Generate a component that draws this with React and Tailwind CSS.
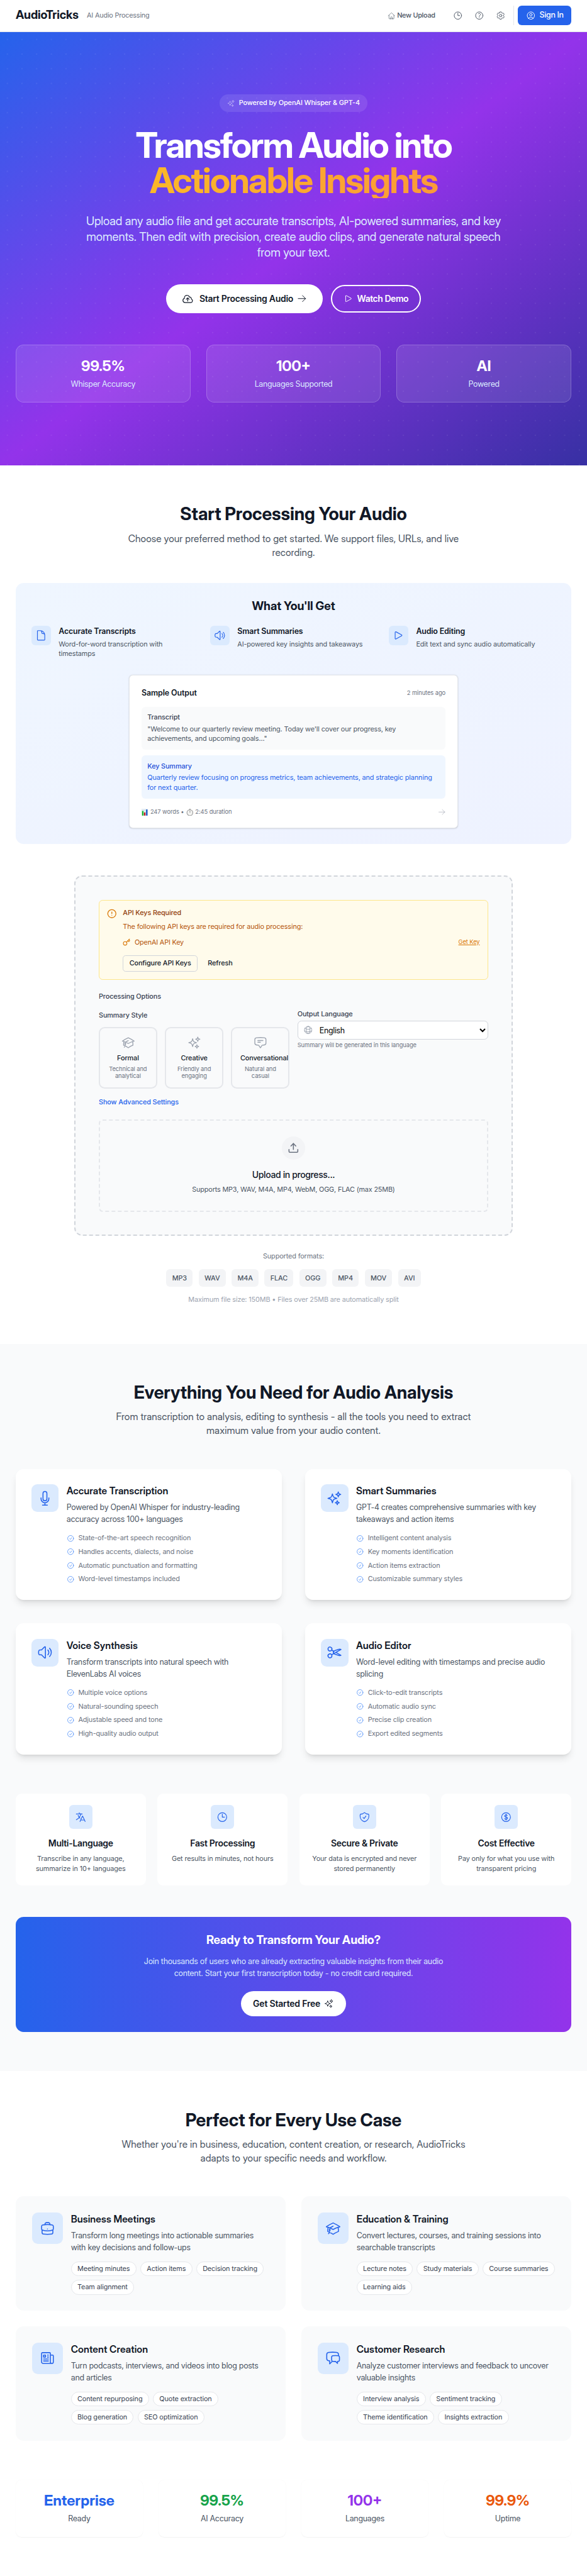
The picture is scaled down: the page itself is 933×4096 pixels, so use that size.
import React from "react";
import { CircleAlert, Key, Upload } from "lucide-react";
import {
  HiOutlineHome,
  HiOutlineClock,
  HiOutlineQuestionMarkCircle,
  HiOutlineCog6Tooth,
  HiOutlineUserCircle,
  HiOutlineSparkles,
  HiOutlineCloudArrowUp,
  HiOutlineArrowRight,
  HiOutlinePlay,
  HiOutlineDocument,
  HiOutlineSpeakerWave,
  HiOutlineAcademicCap,
  HiOutlineChatBubbleBottomCenterText,
  HiOutlineGlobeAlt,
  HiOutlineMicrophone,
  HiOutlineScissors,
  HiOutlineCheckCircle,
  HiOutlineLanguage,
  HiOutlineShieldCheck,
  HiOutlineCurrencyDollar,
  HiOutlineBriefcase,
  HiOutlineNewspaper,
  HiOutlineChatBubbleLeftRight,
} from "react-icons/hi2";

const T12 = "text-[12px] leading-4 tracking-[-0.008em]";
const T14 = "text-[14px] leading-5 tracking-[-0.0125em]";
const T16 = "text-[16px] leading-6 tracking-[-0.023em]";
const T20B = "font-['Inter_Display','Inter',sans-serif] text-[20px] leading-7 font-semibold tracking-[0.005em]";

function Lines({ text }) {
  return text.map((line, i) => (
    <React.Fragment key={line}>
      {i > 0 && <br />}
      {line}
    </React.Fragment>
  ));
}

function SectionHead({ title, text }) {
  return (
    <div className="text-center font-['Inter_Display','Inter',sans-serif]">
      <h2 className="text-[36px] leading-10 font-bold tracking-[-0.0038em] text-[#111827]">{title}</h2>
      <p className="mt-4 text-[20px] leading-7 tracking-[0.0039em] text-[#4b5563]">
        <Lines text={text} />
      </p>
    </div>
  );
}

function Header() {
  return (
    <header className="flex h-[65px] items-center justify-between border-b border-[#e5e7eb] bg-white px-8">
      <div className="flex items-center gap-[17px]">
        <div className="font-['Inter_Display','Inter',sans-serif] text-[24px] leading-8 font-bold tracking-[-0.005em] text-[#111827]">AudioTricks</div>
        <div className="text-[14px] leading-5 tracking-[-0.0195em] text-[#6b7280]">AI Audio Processing</div>
      </div>
      <div className="flex items-center text-[#4b5563]">
        <div className="flex items-center gap-1">
          <HiOutlineHome className="size-4 stroke-[1.2]" />
          <span className="text-[14px] leading-5 font-medium tracking-[-0.026em]">New Upload</span>
        </div>
        <div className="ml-9 flex gap-6 pr-4">
          <HiOutlineClock className="size-5" />
          <HiOutlineQuestionMarkCircle className="size-5" />
          <HiOutlineCog6Tooth className="size-5" />
        </div>
        <div className="h-10 border-l border-[#e5e7eb]" />
        <div className="ml-2 flex h-10 w-[109px] items-center justify-center gap-2 rounded-lg bg-[#2563eb] text-white">
          <HiOutlineUserCircle className="size-5" />
          <span className="text-[16px] leading-6 font-medium tracking-[-0.0286em]">Sign In</span>
        </div>
      </div>
    </header>
  );
}

const HERO_STATS = [
  ["99.5%", "Whisper Accuracy"],
  ["100+", "Languages Supported"],
  ["AI", "Powered"],
];

function Hero() {
  return (
    <section className="h-[886.4px] bg-[radial-gradient(circle_at_center,rgba(255,255,255,0.07)_1px,transparent_1.5px),linear-gradient(to_bottom_right,#2563eb,#9333ea,#3730a3)] bg-[size:30px_30px,100%_100%] px-8 pt-32 text-white">
      <div className="flex flex-col items-center text-center font-['Inter_Display','Inter',sans-serif]">
        <div className="flex h-9 items-center gap-2 rounded-full bg-white/10 px-4 font-['Inter']">
          <HiOutlineSparkles className="size-4 stroke-1 opacity-80" />
          <span className="text-[14px] leading-5 font-medium tracking-[-0.0095em]">Powered by OpenAI Whisper &amp; GPT-4</span>
        </div>
        <h1 className="mt-8 w-[896px] text-[72px] leading-[72px] font-bold tracking-[-0.0372em]">
          Transform Audio into
          <span className="block bg-[linear-gradient(to_right,#fbbf24,#fb923c)] bg-clip-text text-transparent">Actionable Insights</span>
        </h1>
        <p className="mt-8 text-[24px] leading-8 tracking-[-0.0064em] text-[#dbeafe]">
          <Lines
            text={[
              "Upload any audio file and get accurate transcripts, AI-powered summaries, and key",
              "moments. Then edit with precision, create audio clips, and generate natural speech",
              "from your text.",
            ]}
          />
        </p>
        <div className="mt-12 flex items-center gap-4 font-['Inter'] text-[18px] leading-7">
          <div className="flex h-[60px] w-[321px] items-center justify-center rounded-full bg-white text-[#111827]">
            <HiOutlineCloudArrowUp className="size-6" />
            <span className="mr-2 ml-3 font-semibold tracking-[-0.0192em]">Start Processing Audio</span>
            <HiOutlineArrowRight className="size-5" />
          </div>
          <div className="flex h-14 w-[185px] items-center justify-center gap-2 rounded-full border-[2.6px] border-white">
            <HiOutlinePlay className="size-5" />
            <span className="font-semibold tracking-[-0.032em]">Watch Demo</span>
          </div>
        </div>
      </div>
      <div className="mt-16 grid grid-cols-3 gap-8 text-center">
        {HERO_STATS.map(([value, label]) => (
          <div key={label} className="h-[118px] rounded-2xl border border-white/20 bg-white/10 pt-6">
            <div className="font-['Inter_Display','Inter',sans-serif] text-[30px] leading-9 font-bold">{value}</div>
            <div className="mt-2 text-[16px] leading-6 tracking-[-0.0266em] text-[#dbeafe]">{label}</div>
          </div>
        ))}
      </div>
    </section>
  );
}

const BENEFITS = [
  [HiOutlineDocument, "Accurate Transcripts", ["Word-for-word transcription with", "timestamps"]],
  [HiOutlineSpeakerWave, "Smart Summaries", ["AI-powered key insights and takeaways"]],
  [HiOutlinePlay, "Audio Editing", ["Edit text and sync audio automatically"]],
];

function BarsGlyph() {
  return (
    <svg viewBox="0 0 13 14" className="h-[14px] w-[13px]">
      <rect width="13" height="14" fill="#e3edf3" />
      <path d="M0 3.5h13M0 7h13M0 10.5h13" stroke="#c5d3dc" strokeWidth="0.4" />
      <rect x="1" y="4.5" width="3" height="9.5" fill="#16b62c" />
      <rect x="5" y="7.5" width="3" height="6.5" fill="#c4151c" />
      <rect x="9.2" y="1.5" width="3" height="12.5" fill="#1756c4" />
    </svg>
  );
}

function WatchGlyph() {
  return (
    <svg viewBox="0 0 15 15" className="h-[15px] w-[15px]">
      <rect x="6.2" y="0" width="2.6" height="2" fill="#9a9a9a" />
      <circle cx="7.5" cy="8" r="6" fill="#f4f4f2" stroke="#a3a3a3" strokeWidth="1.6" />
      <path d="M7.5 8V3.8" stroke="#6b6b6b" strokeWidth="0.8" />
      <path d="M7.5 8l1-2.4" stroke="#b0b0b0" strokeWidth="0.8" />
    </svg>
  );
}

function WhatYouGet() {
  return (
    <div className="mt-12 h-[534px] rounded-2xl bg-[linear-gradient(to_bottom_right,#eff6ff,#eef2ff)] p-8">
      <h3 className="text-center font-['Inter_Display','Inter',sans-serif] text-[24px] leading-8 font-bold tracking-[-0.001em] text-[#111827]">What You'll Get</h3>
      <div className="mt-6 grid h-[68px] grid-cols-3 gap-6">
        {BENEFITS.map(([Icon, title, text]) => (
          <div key={title} className="flex gap-4">
            <div className="flex size-10 shrink-0 items-center justify-center rounded-lg bg-[#dbeafe] text-[#2563eb]">
              <Icon className="size-6" />
            </div>
            <div className="whitespace-nowrap">
              <div className="text-[16px] leading-6 font-semibold tracking-[-0.0144em] text-[#111827]">{title}</div>
              <p className={T14 + " mt-1 text-[#4b5563]"}>
                <Lines text={text} />
              </p>
            </div>
          </div>
        ))}
      </div>
      <div className="mx-auto mt-8 h-[314px] w-[672px] rounded-lg border border-[#e5e7eb] bg-white px-6 pt-6 shadow-sm">
        <div className="flex items-center justify-between">
          <div className="text-[16px] leading-6 font-semibold tracking-[-0.0087em] text-[#111827]">Sample Output</div>
          <div className={T12 + " text-[#6b7280]"}>2 minutes ago</div>
        </div>
        <div className={T14 + " mt-4 h-[88px] rounded-lg bg-[#f9fafb] p-3"}>
          <div className="font-medium text-[#374151]">Transcript</div>
          <p className="mt-1 whitespace-nowrap text-[#4b5563]">
            <Lines text={["\"Welcome to our quarterly review meeting. Today we'll cover our progress, key", 'achievements, and upcoming goals..."']} />
          </p>
        </div>
        <div className={T14 + " mt-3 h-[88px] rounded-lg bg-[#eff6ff] p-3"}>
          <div className="font-medium text-[#1d4ed8]">Key Summary</div>
          <p className="mt-1 whitespace-nowrap text-[#2563eb]">
            <Lines text={["Quarterly review focusing on progress metrics, team achievements, and strategic planning", "for next quarter."]} />
          </p>
        </div>
        <div className="mt-4 flex h-6 items-center justify-between">
          <div className={T12 + " flex items-center text-[#6b7280]"}>
            <BarsGlyph />
            <span className="mr-1 ml-[5px]">247 words •</span>
            <WatchGlyph />
            <span className="ml-1">2:45 duration</span>
          </div>
          <HiOutlineArrowRight className="size-4 stroke-[1.2] text-[#9ca3af]" />
        </div>
      </div>
    </div>
  );
}

const STYLES = [
  [HiOutlineAcademicCap, "Formal", ["Technical and", "analytical"]],
  [HiOutlineSparkles, "Creative", ["Friendly and", "engaging"]],
  [HiOutlineChatBubbleBottomCenterText, "Conversational", ["Natural and", "casual"]],
];

function Uploader() {
  return (
    <div className="mx-auto mt-16 h-[738px] w-[896px] rounded-2xl border-[2.6px] border-dashed border-[#d1d5db] bg-[#f9fafb] p-[47.4px]">
      <div className="flex h-[164px] rounded-lg border border-[#fde68a] bg-[#fffbeb] p-4">
        <CircleAlert className="mt-0.5 mr-3 size-5 shrink-0 text-[#d97706]" />
        <div className={T14 + " grow text-[#b45309]"}>
          <div className="font-medium text-[#92400e]">API Keys Required</div>
          <p className="mt-2">The following API keys are required for audio processing:</p>
          <div className="mt-3 flex items-center">
            <Key className="mr-2 size-4 text-[#d97706]" />
            <span className="tracking-[-0.018em]">OpenAI API Key</span>
            <span className={T12 + " ml-auto text-[#d97706] underline"}>Get Key</span>
          </div>
          <div className="mt-4 flex gap-2 font-medium text-[#111827]">
            <div className="flex h-[34px] items-center rounded-md border border-[#d1d5db] px-3">Configure API Keys</div>
            <div className="flex h-[34px] items-center px-[13px]">Refresh</div>
          </div>
        </div>
      </div>
      <div className={T14 + " mt-6 font-medium text-[#374151]"}>Processing Options</div>
      <div className="mt-4 grid h-[162px] grid-cols-2 gap-4">
        <div>
          <div className={T14 + " mt-[3px] font-medium text-[#374151]"}>Summary Style</div>
          <div className="mt-[13px] grid grid-cols-3 gap-4">
            {STYLES.map(([Icon, name, text]) => (
              <div key={name} className="h-[126px] min-w-0 rounded-xl border-[2.6px] border-[#e5e7eb] px-4 pt-[16px] text-center whitespace-nowrap">
                <Icon className="mx-auto block size-7 text-[#9ca3af]" />
                <div className={T14 + " mt-2 font-medium text-[#111827]"}>{name}</div>
                <div className="mt-1 text-[12px] leading-[15px] tracking-[-0.01em] text-[#6b7280]">
                  <Lines text={text} />
                </div>
              </div>
            ))}
          </div>
        </div>
        <div>
          <div className={T14 + " font-medium text-[#374151]"}>Output Language</div>
          <div className="relative mt-1">
            <HiOutlineGlobeAlt className="absolute top-[9px] left-3 size-5 text-[#9ca3af]" />
            <select className="block h-[38px] w-full rounded-lg border border-[#d1d5db] bg-white pl-10 text-[16px] tracking-[-0.027em] text-black">
              <option>English</option>
            </select>
          </div>
          <div className={T12 + " mt-1 text-[#6b7280]"}>Summary will be generated in this language</div>
        </div>
      </div>
      <div className={T14 + " mt-[19px] font-medium text-[#2563eb]"}>Show Advanced Settings</div>
      <div className="mt-[25px] flex h-[188px] flex-col items-center rounded-lg border-[2.6px] border-dashed border-[#e5e7eb] pt-[31.4px]">
        <div className="flex size-12 items-center justify-center rounded-full bg-[#f3f4f6] text-[#6b7280]">
          <Upload className="size-6" />
        </div>
        <div className="mt-4 text-[18px] leading-7 font-medium tracking-[-0.0267em] text-[#111827]">Upload in progress...</div>
        <div className="mt-2 text-[14px] leading-5 tracking-[-0.0165em] text-[#4b5563]">Supports MP3, WAV, M4A, MP4, WebM, OGG, FLAC (max 25MB)</div>
      </div>
    </div>
  );
}

const FORMATS = ["MP3", "WAV", "M4A", "FLAC", "OGG", "MP4", "MOV", "AVI"];

function UploadSection() {
  return (
    <section className="h-[1796.6px] bg-white px-8 pt-[80.6px]">
      <SectionHead title="Start Processing Your Audio" text={["Choose your preferred method to get started. We support files, URLs, and live", "recording."]} />
      <WhatYouGet />
      <Uploader />
      <div className={T14 + " mt-8 flex flex-col items-center text-[#6b7280]"}>
        <div>Supported formats:</div>
        <div className="mt-4 flex gap-3 font-medium text-[#4b5563]">
          {FORMATS.map((f) => (
            <div key={f} className="flex h-9 items-center rounded-lg bg-[#f3f4f6] px-3">
              {f}
            </div>
          ))}
        </div>
        <div className="mt-4 text-[#9ca3af]">Maximum file size: 150MB • Files over 25MB are automatically split</div>
      </div>
    </section>
  );
}

const FEATURES = [
  [
    HiOutlineMicrophone,
    "Accurate Transcription",
    ["Powered by OpenAI Whisper for industry-leading", "accuracy across 100+ languages"],
    ["State-of-the-art speech recognition", "Handles accents, dialects, and noise", "Automatic punctuation and formatting", "Word-level timestamps included"],
  ],
  [
    HiOutlineSparkles,
    "Smart Summaries",
    ["GPT-4 creates comprehensive summaries with key", "takeaways and action items"],
    ["Intelligent content analysis", "Key moments identification", "Action items extraction", "Customizable summary styles"],
  ],
  [
    HiOutlineSpeakerWave,
    "Voice Synthesis",
    ["Transform transcripts into natural speech with", "ElevenLabs AI voices"],
    ["Multiple voice options", "Natural-sounding speech", "Adjustable speed and tone", "High-quality audio output"],
  ],
  [
    HiOutlineScissors,
    "Audio Editor",
    ["Word-level editing with timestamps and precise audio", "splicing"],
    ["Click-to-edit transcripts", "Automatic audio sync", "Precise clip creation", "Export edited segments"],
  ],
];

const PERKS = [
  [HiOutlineLanguage, "Multi-Language", ["Transcribe in any language,", "summarize in 10+ languages"]],
  [HiOutlineClock, "Fast Processing", ["Get results in minutes, not hours"]],
  [HiOutlineShieldCheck, "Secure & Private", ["Your data is encrypted and never", "stored permanently"]],
  [HiOutlineCurrencyDollar, "Cost Effective", ["Pay only for what you use with", "transparent pricing"]],
];

function FeaturesSection() {
  return (
    <section className="h-[1488px] bg-[#f9fafb] px-8 pt-20">
      <SectionHead
        title="Everything You Need for Audio Analysis"
        text={["From transcription to analysis, editing to synthesis - all the tools you need to extract", "maximum value from your audio content."]}
      />
      <div className="mt-16 grid grid-cols-2 gap-12">
        {FEATURES.map(([Icon, title, text, points]) => (
          <div key={title} className="flex h-[268px] gap-4 rounded-2xl bg-white p-8 shadow-lg">
            <div className="flex size-14 shrink-0 items-center justify-center rounded-xl bg-[#dbeafe] text-[#2563eb]">
              <Icon className="size-8" />
            </div>
            <div className="whitespace-nowrap">
              <h3 className={T20B + " text-[#111827]"}>{title}</h3>
              <p className={T16 + " mt-2 text-[#4b5563]"}>
                <Lines text={text} />
              </p>
              <ul className={T14 + " mt-4 flex flex-col gap-2 text-[#6b7280]"}>
                {points.map((point) => (
                  <li key={point} className="flex items-center gap-2">
                    <HiOutlineCheckCircle className="size-4 stroke-[1.4] text-[#3b82f6]" />
                    {point}
                  </li>
                ))}
              </ul>
            </div>
          </div>
        ))}
      </div>
      <div className="mt-20 grid grid-cols-4 gap-6 text-center">
        {PERKS.map(([Icon, title, text]) => (
          <div key={title} className="flex h-[188px] flex-col items-center rounded-xl bg-white pt-6">
            <div className="flex size-12 items-center justify-center rounded-lg bg-[#dbeafe] text-[#2563eb]">
              <Icon className="size-6" />
            </div>
            <h3 className="mt-4 text-[18px] leading-7 font-semibold tracking-[-0.0222em] text-[#111827]">{title}</h3>
            <p className={T14 + " mt-2 text-[#4b5563]"}>
              <Lines text={text} />
            </p>
          </div>
        ))}
      </div>
      <div className="mt-16 flex h-[236px] flex-col items-center rounded-2xl bg-[linear-gradient(to_right,#2563eb,#9333ea)] pt-8 text-center text-white">
        <h3 className="font-['Inter_Display','Inter',sans-serif] text-[24px] leading-8 font-bold tracking-[-0.0013em]">Ready to Transform Your Audio?</h3>
        <p className={T16 + " mt-4 text-[#dbeafe]"}>
          <Lines text={["Join thousands of users who are already extracting valuable insights from their audio", "content. Start your first transcription today - no credit card required."]} />
        </p>
        <div className="mt-6 flex h-[52px] w-[214px] items-center justify-center gap-2 rounded-full bg-white text-[#111827]">
          <span className="text-[18px] leading-7 font-semibold tracking-[-0.0135em]">Get Started Free</span>
          <HiOutlineSparkles className="size-5" />
        </div>
      </div>
    </section>
  );
}

const CASES = [
  [
    HiOutlineBriefcase,
    "Business Meetings",
    ["Transform long meetings into actionable summaries", "with key decisions and follow-ups"],
    [["Meeting minutes", "Action items", "Decision tracking"], ["Team alignment"]],
  ],
  [
    HiOutlineAcademicCap,
    "Education & Training",
    ["Convert lectures, courses, and training sessions into", "searchable transcripts"],
    [["Lecture notes", "Study materials", "Course summaries"], ["Learning aids"]],
  ],
  [
    HiOutlineNewspaper,
    "Content Creation",
    ["Turn podcasts, interviews, and videos into blog posts", "and articles"],
    [["Content repurposing", "Quote extraction"], ["Blog generation", "SEO optimization"]],
  ],
  [
    HiOutlineChatBubbleLeftRight,
    "Customer Research",
    ["Analyze customer interviews and feedback to uncover", "valuable insights"],
    [["Interview analysis", "Sentiment tracking"], ["Theme identification", "Insights extraction"]],
  ],
];

const STATS = [
  ["Enterprise", "Ready", "text-[#2563eb]"],
  ["99.5%", "AI Accuracy", "text-[#16a34a]"],
  ["100+", "Languages", "text-[#9333ea]"],
  ["99.9%", "Uptime", "text-[#ea580c]"],
];

function UseCasesSection() {
  return (
    <section className="h-[1032px] bg-white px-8 pt-20">
      <SectionHead
        title="Perfect for Every Use Case"
        text={["Whether you're in business, education, content creation, or research, AudioTricks", "adapts to your specific needs and workflow."]}
      />
      <div className="mt-16 grid grid-cols-2 gap-8">
        {CASES.map(([Icon, title, text, rows]) => (
          <div key={title} className="flex h-[234px] gap-4 rounded-2xl bg-[#f9fafb] p-[33px]">
            <div className="flex size-16 shrink-0 items-center justify-center rounded-xl bg-[#dbeafe] text-[#2563eb]">
              <Icon className="size-8" />
            </div>
            <div className="whitespace-nowrap">
              <h3 className={T20B + " text-[#111827]"}>{title}</h3>
              <p className={T16 + " mt-2 text-[#4b5563]"}>
                <Lines text={text} />
              </p>
              <div className={T14 + " mt-4 flex flex-col gap-2 text-[#374151]"}>
                {rows.map((row) => (
                  <div key={row[0]} className="flex gap-2">
                    {row.map((tag) => (
                      <span key={tag} className="flex h-[30px] items-center rounded-full border border-[#e5e7eb] bg-white px-3">
                        {tag}
                      </span>
                    ))}
                  </div>
                ))}
              </div>
            </div>
          </div>
        ))}
      </div>
      <div className="mt-20 grid grid-cols-4 gap-8 text-center">
        {STATS.map(([value, label, color]) => (
          <div key={label} className="h-[116px] rounded-xl bg-white pt-6 shadow-[0_1px_2px_0_rgba(0,0,0,0.05)]">
            <div className={"font-['Inter_Display','Inter',sans-serif] text-[30px] leading-9 font-bold " + color}>{value}</div>
            <div className={T16 + " mt-2 text-[#4b5563]"}>{label}</div>
          </div>
        ))}
      </div>
    </section>
  );
}

export default function App() {
  return (
    <div className="w-[1200px] overflow-hidden bg-white font-['Inter'] [zoom:0.7775]">
      <Header />
      <Hero />
      <UploadSection />
      <FeaturesSection />
      <UseCasesSection />
    </div>
  );
}
